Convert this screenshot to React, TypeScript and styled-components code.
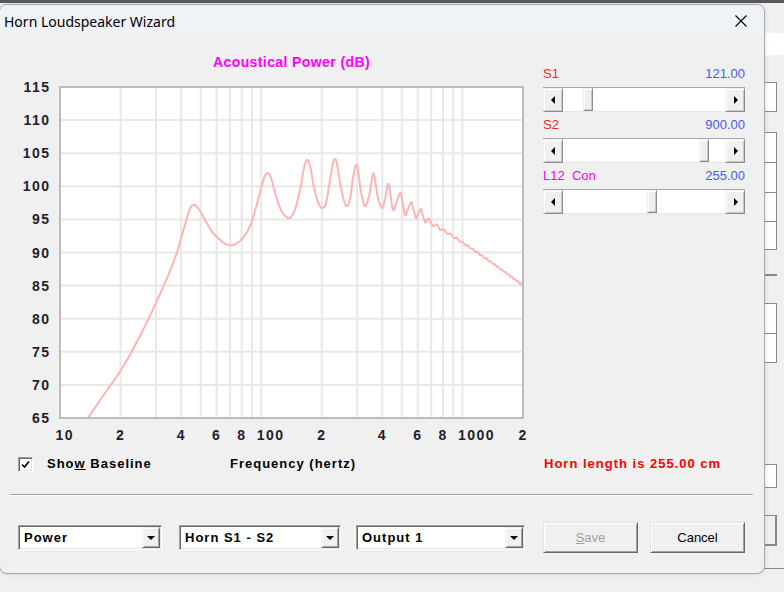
import React from 'react';
import styled, { createGlobalStyle } from 'styled-components';

const GlobalStyle = createGlobalStyle`
  html, body {
    margin: 0;
    padding: 0;
    background: #f0f0f0;
  }
  body {
    font-family: "Liberation Sans", Arial, sans-serif;
  }
`;

// ---------- desktop / window behind ----------

const Desktop = styled.div`
  position: relative;
  width: 784px;
  height: 592px;
  overflow: hidden;
  background: #f0f0f0;
`;

const TopStrip = styled.div`
  height: 3px;
  background: #5a5a5a;
`;

const BackWindow = styled.div`
  display: flex;
  justify-content: flex-end;
`;

const BackColumn = styled.div`
  width: 29px;
  display: flex;
  flex-direction: column;
  align-items: flex-start;
`;

const BackBand = styled.div<{ $top: number }>`
  margin-top: ${p => p.$top}px;
  width: 29px;
  height: 22px;
  background: #ffffff;
`;

const BackField = styled.div<{ $top: number; $height: number }>`
  margin-top: ${p => p.$top}px;
  width: 22px;
  height: ${p => p.$height}px;
  box-sizing: border-box;
  background: #ffffff;
  border: 1px solid #8a8a8a;
`;

const BackButton = styled.div<{ $top: number }>`
  margin-top: ${p => p.$top}px;
  width: 22px;
  height: 31px;
  box-sizing: border-box;
  background: #f0f0f0;
  border: 1px solid #8a8a8a;
  border-right-width: 2px;
  border-bottom-width: 2px;
`;

const BackRule = styled.div<{ $top: number; $wide?: boolean }>`
  margin-top: ${p => p.$top}px;
  width: ${p => (p.$wide ? 29 : 22)}px;
  height: 0;
  border-top: ${p => (p.$wide ? 1 : 2)}px solid #8a8a8a;
`;

// ---------- dialog ----------

const Dialog = styled.div`
  position: absolute;
  left: -1px;
  top: 4px;
  width: 766px;
  height: 570px;
  box-sizing: border-box;
  border: 1px solid #a9a9a9;
  border-radius: 8px;
  background: #f0f0f0;
  overflow: hidden;
  display: flex;
  flex-direction: column;
  box-shadow: 0 0 5px rgba(0, 0, 0, 0.12);
`;

const TitleBar = styled.div`
  height: 32px;
  flex: none;
  display: flex;
  align-items: center;
  justify-content: space-between;
  background: #eff3f8;
`;

const TitleText = styled.span`
  padding-left: 4px;
  font-family: "Noto Sans", "Open Sans", sans-serif;
  font-size: 14px;
  color: #000000;
`;

const CloseBox = styled.div`
  width: 46px;
  height: 32px;
  display: flex;
  align-items: center;
  justify-content: center;
`;

const Body = styled.div`
  flex: 1;
  display: flex;
  flex-direction: column;
`;

const TopSection = styled.div`
  display: flex;
`;

const ChartColumn = styled.div`
  width: 535px;
  display: flex;
  flex-direction: column;
`;

const ChartTitle = styled.div`
  margin-top: 17px;
  margin-left: 60px;
  width: 463px;
  height: 16px;
  line-height: 16px;
  text-align: center;
  font-size: 14px;
  font-weight: bold;
  letter-spacing: 0.4px;
  color: #ff00ff;
`;

const ChartSvg = styled.svg`
  display: block;
  margin-top: 8px;
`;

const SliderColumn = styled.div`
  margin-left: 8px;
  margin-top: 28px;
  width: 202px;
  display: flex;
  flex-direction: column;
`;

const SliderGroup = styled.div`
  & + & {
    margin-top: 4px;
  }
`;

const SliderHead = styled.div`
  height: 16px;
  line-height: 17px;
  display: flex;
  justify-content: space-between;
  font-size: 13px;
  white-space: pre;
`;

const SliderName = styled.span<{ $color: string }>`
  color: ${p => p.$color};
`;

const SliderValue = styled.span`
  color: #4460f0;
`;

const ScrollBar = styled.div`
  margin-top: 6px;
  height: 25px;
  display: flex;
  background: #ffffff;
  box-sizing: border-box;
  border-top: 1px solid #a8a8a8;
`;

const ArrowButton = styled.div`
  width: 20px;
  flex: none;
  box-sizing: border-box;
  background: #f0f0f0;
  border: 1px solid;
  border-color: #f0f0f0 #8c8c8c #8c8c8c #f0f0f0;
  box-shadow: inset 1px 1px #ffffff, inset -1px -1px #c8c8c8;
  display: flex;
  align-items: center;
  justify-content: center;
`;

const Arrow = styled.span<{ $dir: 'left' | 'right' }>`
  width: 0;
  height: 0;
  border-top: 4px solid transparent;
  border-bottom: 4px solid transparent;
  ${p =>
    p.$dir === 'left'
      ? 'border-right: 4px solid #000; margin-left: -1px;'
      : 'border-left: 4px solid #000; margin-left: 1px;'}
`;

const Track = styled.div`
  flex: 1;
  display: flex;
  border-bottom: 1px solid #e6e6e6;
`;

const Thumb = styled.div`
  width: 10px;
  flex: none;
  box-sizing: border-box;
  background: #f0f0f0;
  border: 1px solid;
  border-color: #f0f0f0 #8c8c8c #8c8c8c #f0f0f0;
  box-shadow: inset 1px 1px #ffffff, inset -1px -1px #c8c8c8;
`;

const InfoRow = styled.div`
  margin-top: 8px;
  height: 16px;
  padding-left: 18px;
  display: grid;
  grid-template-columns: 212px 314px auto;
  align-items: center;
`;

const CheckLabel = styled.label`
  display: flex;
  align-items: center;
  gap: 14px;
`;

const CheckBox = styled.span`
  width: 15px;
  height: 15px;
  box-sizing: border-box;
  background: #ffffff;
  border: 1px solid;
  border-color: #a0a0a0 #ffffff #ffffff #a0a0a0;
  box-shadow: inset 1px 1px #696969, inset -1px -1px #e3e3e3;
  display: flex;
  align-items: center;
  justify-content: center;
`;

const Caption = styled.span<{ $color?: string }>`
  font-size: 13px;
  font-weight: bold;
  letter-spacing: 1px;
  line-height: 16px;
  white-space: nowrap;
  color: ${p => p.$color ?? '#000000'};
`;

const Separator = styled.div`
  margin: 22px 11px 0 10px;
  border-top: 1px solid #a0a0a0;
  border-bottom: 1px solid #ffffff;
`;

const ControlsRow = styled.div`
  margin-top: 26px;
  height: 31px;
  padding-left: 18px;
  display: flex;
  align-items: center;
`;

const Combo = styled.div<{ $width: number; $gap: number }>`
  width: ${p => p.$width}px;
  margin-left: ${p => p.$gap}px;
  height: 25px;
  box-sizing: border-box;
  display: flex;
  background: #ffffff;
  border: 1px solid;
  border-color: #a0a0a0 #ffffff #ffffff #a0a0a0;
  box-shadow: inset 1px 1px #696969, inset -1px -1px #e3e3e3;
  padding: 1px;
`;

const ComboText = styled.span`
  flex: 1;
  padding-left: 4px;
  font-size: 13px;
  font-weight: bold;
  letter-spacing: 1px;
  line-height: 21px;
  color: #000000;
  white-space: nowrap;
`;

const ComboButton = styled.span`
  width: 18px;
  flex: none;
  box-sizing: border-box;
  background: #f0f0f0;
  border: 1px solid;
  border-color: #f0f0f0 #696969 #696969 #f0f0f0;
  box-shadow: inset 1px 1px #ffffff, inset -1px -1px #a0a0a0;
  display: flex;
  align-items: center;
  justify-content: center;
`;

const DownArrow = styled.span`
  width: 0;
  height: 0;
  border-left: 4px solid transparent;
  border-right: 4px solid transparent;
  border-top: 4px solid #000;
  margin-top: 1px;
`;

const PushButton = styled.button<{ $gap: number }>`
  width: 95px;
  height: 31px;
  margin-left: ${p => p.$gap}px;
  padding: 0;
  box-sizing: border-box;
  background: #f0f0f0;
  border: 1px solid;
  border-color: #e3e3e3 #696969 #696969 #e3e3e3;
  box-shadow: inset 1px 1px #ffffff, inset -1px -1px #a0a0a0;
  font-family: "Liberation Sans", Arial, sans-serif;
  font-size: 13px;
  color: #000000;

  &:disabled {
    color: #a0a0a0;
  }
`;

// ---------- chart ----------

const PLOT = { left: 60, right: 523, top: 87, bottom: 418 };
const DECADE = (PLOT.right - PLOT.left) / Math.log10(200);
const fx = (f: number) => PLOT.left + Math.log10(f / 10) * DECADE;
const fy = (db: number) => PLOT.top + ((115 - db) * (PLOT.bottom - PLOT.top)) / 50;
const xToF = (x: number) => 10 * Math.pow(10, (x - PLOT.left) / DECADE);

const gridFreqs = [20, 30, 40, 50, 60, 70, 80, 90, 100, 200, 300, 400, 500, 600, 700, 800, 900, 1000];
const gridDb = [110, 105, 100, 95, 90, 85, 80, 75, 70];
const xLabels: [number, string][] = [
  [10, '10'], [20, '2'], [40, '4'], [60, '6'], [80, '8'], [100, '100'],
  [200, '2'], [400, '4'], [600, '6'], [800, '8'], [1000, '1000'], [2000, '2'],
];
const yLabels = [115, 110, 105, 100, 95, 90, 85, 80, 75, 70, 65];

// traced peaks and dips of the response, in pixels
const keyPoints: [number, number][] = [
  [88, 418], [105, 393], [121, 370], [140, 336], [160, 294], [175, 258], [184, 228], [189, 211],
  [193, 205], [198, 208], [205, 220], [214, 234], [228, 245], [240, 241], [250, 226], [258, 200],
  [263, 181], [267, 173], [271, 178], [276, 196], [281, 210], [288, 218], [294, 212], [300, 190],
  [304, 168], [307, 160], [310, 166], [314, 187], [318, 202], [322, 208], [326, 203], [330, 180],
  [333, 163], [335, 159], [337, 164], [341, 188], [346, 206], [350, 199], [353, 178], [356, 165],
  [358, 170], [361, 192], [365, 206], [369, 196], [373, 174], [375, 180], [378, 198], [382, 208],
  [385, 199], [388, 184], [390, 191], [393, 210], [396, 204], [400, 193], [402, 199], [405, 215],
  [408, 209], [411, 202], [413, 208], [416, 218], [418, 214], [421, 209], [422, 213], [425, 222],
];

const buildCurve = () => {
  const pts: [number, number][] = [];
  const n = keyPoints.length;
  for (let i = 0; i < n - 1; i++) {
    const p0 = keyPoints[Math.max(i - 1, 0)];
    const p1 = keyPoints[i];
    const p2 = keyPoints[i + 1];
    const p3 = keyPoints[Math.min(i + 2, n - 1)];
    for (let s = 0; s < 6; s++) {
      const t = s / 6;
      const t2 = t * t;
      const t3 = t2 * t;
      const c = (a: number, b: number, d: number, e: number) =>
        0.5 * (2 * b + (-a + d) * t + (2 * a - 5 * b + 4 * d - e) * t2 + (-a + 3 * b - 3 * d + e) * t3);
      pts.push([c(p0[0], p1[0], p2[0], p3[0]), c(p0[1], p1[1], p2[1], p3[1])]);
    }
  }
  // tail: harmonic ripples every ~63 Hz, fading out
  for (let x = 425; x <= PLOT.right; x += 0.5) {
    const d = x - 425;
    const base = 219 + 0.6 * d + 0.0008 * d * d;
    const amp = 0.5 + 2.8 * Math.exp(-d / 15);
    const phase = (xToF(x) - 106) / 63.5;
    pts.push([x, base - amp * Math.cos(2 * Math.PI * (phase - 0.08))]);
  }
  return 'M' + pts.map(([x, y]) => `${x.toFixed(1)},${y.toFixed(1)}`).join(' L');
};

const curvePath = buildCurve();

const AcousticChart: React.FC = () => (
  <ChartSvg width={535} height={370} viewBox="0 78 535 370">
    <rect x={PLOT.left} y={PLOT.top} width={PLOT.right - PLOT.left} height={PLOT.bottom - PLOT.top} fill="#ffffff" />
    {gridFreqs.map(f => (
      <line key={f} x1={fx(f)} x2={fx(f)} y1={PLOT.top} y2={PLOT.bottom} stroke="#e8e8e8" strokeWidth={2} />
    ))}
    {gridDb.map(db => (
      <line key={db} x1={PLOT.left} x2={PLOT.right} y1={fy(db)} y2={fy(db)} stroke="#e8e8e8" strokeWidth={2} />
    ))}
    <path d={curvePath} fill="none" stroke="#ffb4b4" strokeWidth={2} strokeLinejoin="round" />
    <rect
      x={PLOT.left}
      y={PLOT.top}
      width={PLOT.right - PLOT.left}
      height={PLOT.bottom - PLOT.top}
      fill="none"
      stroke="#bcbcbc"
      strokeWidth={2}
    />
    <g fontFamily='"Liberation Sans", Arial, sans-serif' fontSize={14} fontWeight="bold" fill="#1e1e30" letterSpacing={1.5}>
      {yLabels.map(db => (
        <text key={db} x={50.5} y={fy(db) + 5} textAnchor="end">
          {db}
        </text>
      ))}
      {xLabels.map(([f, label], i) => (
        <text key={i} x={fx(f) - 4.5} y={439.5}>
          {label}
        </text>
      ))}
    </g>
  </ChartSvg>
);

// ---------- data ----------

const sliders = [
  { name: 'S1', color: '#ff1c1c', value: '121.00', position: 0.13 },
  { name: 'S2', color: '#ff1c1c', value: '900.00', position: 0.895 },
  { name: 'L12  Con', color: '#ff00ff', value: '255.00', position: 0.55 },
];

const TRACK_TRAVEL = 202 - 40 - 10;

const App: React.FC = () => (
  <>
    <GlobalStyle />
    <Desktop>
      <TopStrip />
      <BackWindow>
        <BackColumn>
          <BackBand $top={30} />
          <BackField $top={27} $height={30} />
          <BackField $top={20} $height={31} />
          <BackField $top={-1} $height={31} />
          <BackField $top={-1} $height={30} />
          <BackField $top={-1} $height={29} />
          <BackRule $top={24} />
          <BackField $top={27} $height={31} />
          <BackField $top={-1} $height={30} />
          <BackField $top={101} $height={24} />
          <BackButton $top={27} />
          <BackRule $top={22} $wide />
        </BackColumn>
      </BackWindow>

      <Dialog>
        <TitleBar>
          <TitleText>Horn Loudspeaker Wizard</TitleText>
          <CloseBox>
            <svg width="12" height="12" viewBox="0 0 12 12">
              <path d="M0.5 0.5 L11.5 11.5 M11.5 0.5 L0.5 11.5" stroke="#000" strokeWidth="1.1" />
            </svg>
          </CloseBox>
        </TitleBar>

        <Body>
          <TopSection>
            <ChartColumn>
              <ChartTitle>Acoustical Power (dB)</ChartTitle>
              <AcousticChart />
            </ChartColumn>

            <SliderColumn>
              {sliders.map(s => (
                <SliderGroup key={s.name}>
                  <SliderHead>
                    <SliderName $color={s.color}>{s.name}</SliderName>
                    <SliderValue>{s.value}</SliderValue>
                  </SliderHead>
                  <ScrollBar>
                    <ArrowButton>
                      <Arrow $dir="left" />
                    </ArrowButton>
                    <Track>
                      <Thumb style={{ marginLeft: `${Math.round(s.position * TRACK_TRAVEL)}px` }} />
                    </Track>
                    <ArrowButton>
                      <Arrow $dir="right" />
                    </ArrowButton>
                  </ScrollBar>
                </SliderGroup>
              ))}
            </SliderColumn>
          </TopSection>

          <InfoRow>
            <CheckLabel>
              <CheckBox>
                <svg width="9" height="9" viewBox="0 0 9 9">
                  <path d="M1 4.5 L3.5 7 L8 1.5" fill="none" stroke="#000" strokeWidth="1.6" />
                </svg>
              </CheckBox>
              <Caption>
                Sho<u>w</u> Baseline
              </Caption>
            </CheckLabel>
            <Caption>Frequency (hertz)</Caption>
            <Caption $color="#ff0000">Horn length is 255.00 cm</Caption>
          </InfoRow>

          <Separator />

          <ControlsRow>
            <Combo $width={144} $gap={0}>
              <ComboText>Power</ComboText>
              <ComboButton>
                <DownArrow />
              </ComboButton>
            </Combo>
            <Combo $width={162} $gap={17}>
              <ComboText>Horn S1 - S2</ComboText>
              <ComboButton>
                <DownArrow />
              </ComboButton>
            </Combo>
            <Combo $width={169} $gap={15}>
              <ComboText>Output 1</ComboText>
              <ComboButton>
                <DownArrow />
              </ComboButton>
            </Combo>
            <PushButton $gap={18} disabled>
              <u>S</u>ave
            </PushButton>
            <PushButton $gap={12}>Cancel</PushButton>
          </ControlsRow>
        </Body>
      </Dialog>
    </Desktop>
  </>
);

export default App;
